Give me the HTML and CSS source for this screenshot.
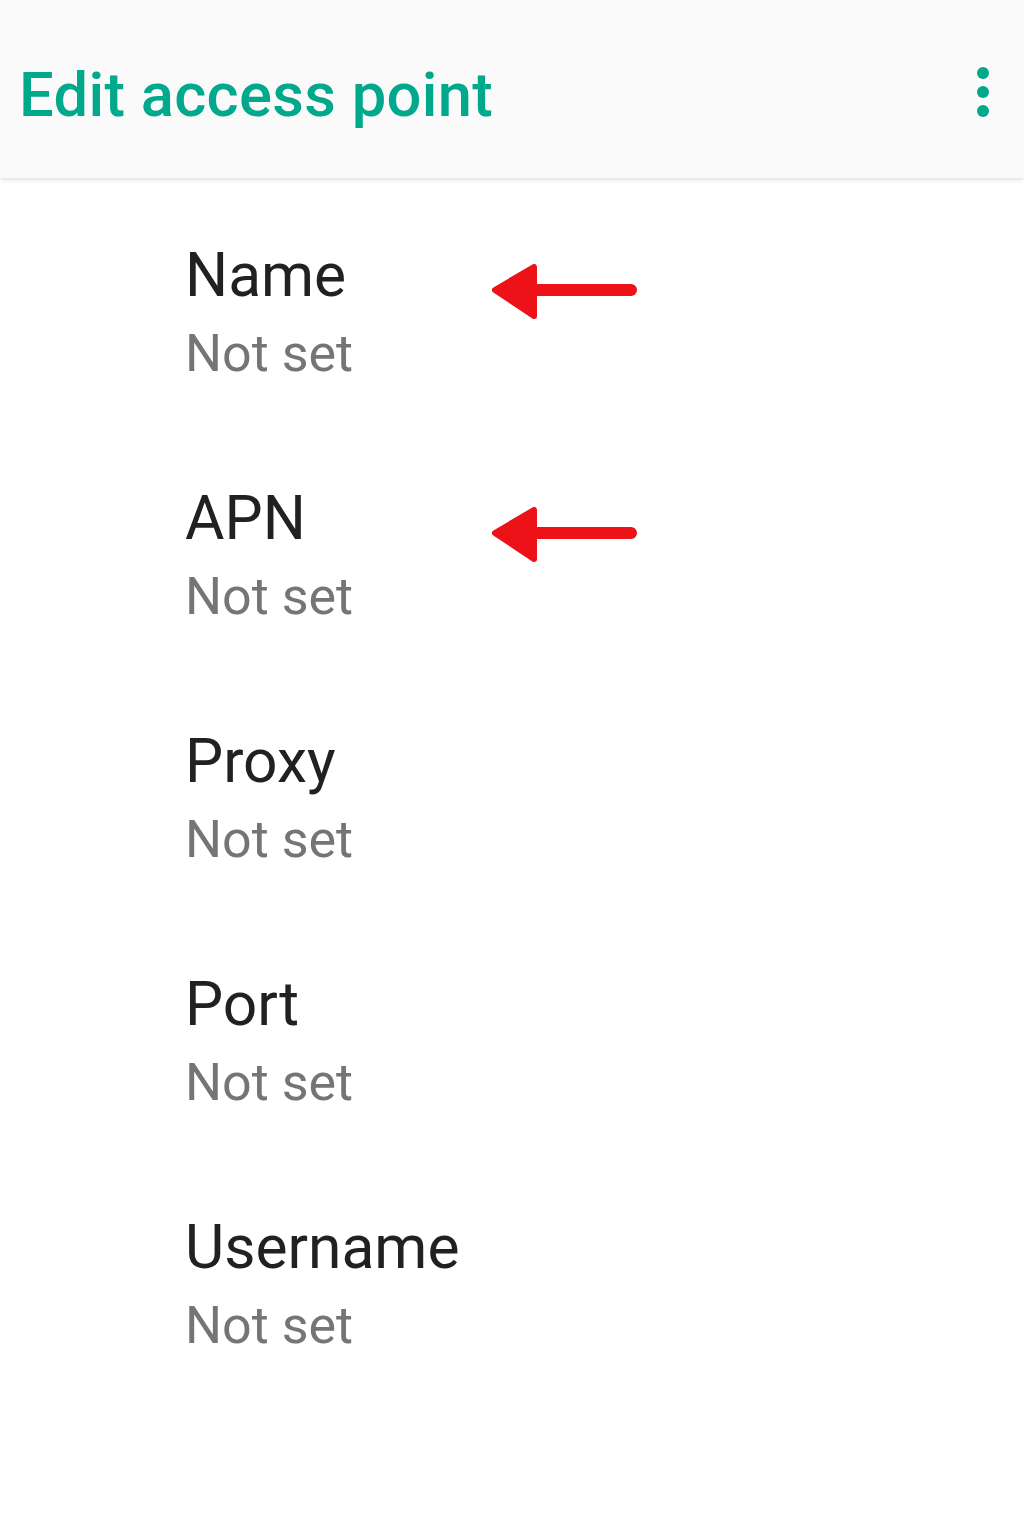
FILE: index.html
```html
<!DOCTYPE html>
<html lang="en">
<head>
    <meta charset="UTF-8">
    <meta name="viewport" content="width=device-width, initial-scale=1.0">
    <title>Edit access point</title>
    <link rel="stylesheet" href="styles.css">
</head>
<body>
<div class="toolbar">
    <h1>Edit access point</h1>
    <button class="menu-btn" aria-label="More options">
        <span></span><span></span><span></span>
    </button>
</div>
<div class="list">
    <div class="item">
        <div class="title">Name</div>
        <div class="summary">Not set</div>
        <svg class="arrow" width="156" height="64" viewBox="0 0 156 64">
            <line x1="44" y1="30" x2="144" y2="30" />
            <polygon points="8,30 47,7 47,56" />
        </svg>
    </div>
    <div class="item">
        <div class="title">APN</div>
        <div class="summary">Not set</div>
        <svg class="arrow" width="156" height="64" viewBox="0 0 156 64">
            <line x1="44" y1="30" x2="144" y2="30" />
            <polygon points="8,30 47,7 47,56" />
        </svg>
    </div>
    <div class="item">
        <div class="title">Proxy</div>
        <div class="summary">Not set</div>
    </div>
    <div class="item">
        <div class="title">Port</div>
        <div class="summary">Not set</div>
    </div>
    <div class="item">
        <div class="title">Username</div>
        <div class="summary">Not set</div>
    </div>
</div>
</body>
</html>
```

FILE: styles.css
```css
body {
    font-family: Roboto, "Noto Sans", sans-serif;
    background-color: #fff;
    margin: 0;
    padding: 0;
    overflow: hidden;
}

.toolbar {
    height: 178px;
    background-color: #fafafa;
    box-shadow: 0 2px 4px rgba(0, 0, 0, 0.12);
    display: flex;
    align-items: center;
    justify-content: space-between;
    padding: 0 20px 0 19px;
    position: relative;
    z-index: 1;
}

.toolbar h1 {
    margin: 12px 0 0 0;
    color: #00a88c;
    font-size: 61.5px;
    font-weight: 500;
    letter-spacing: 0.3px;
}

.menu-btn {
    border: none;
    background: none;
    padding: 0;
    margin: 6px 15px 0 0;
    display: flex;
    flex-direction: column;
    gap: 7px;
}

.menu-btn span {
    width: 12px;
    height: 12px;
    border-radius: 50%;
    background-color: #00a88c;
}

.item {
    position: relative;
    padding: 62px 0 36px 185px;
}

.title {
    color: #212121;
    font-size: 60.5px;
    line-height: 72px;
}

.summary {
    color: #757575;
    font-size: 52px;
    line-height: 62px;
    margin-top: 11px;
}

.arrow {
    position: absolute;
    left: 487px;
    top: 82px;
}

.arrow line {
    stroke: #ec1218;
    stroke-width: 12;
    stroke-linecap: round;
}

.arrow polygon {
    fill: #ec1218;
    stroke: #ec1218;
    stroke-width: 6;
    stroke-linejoin: round;
}
```
